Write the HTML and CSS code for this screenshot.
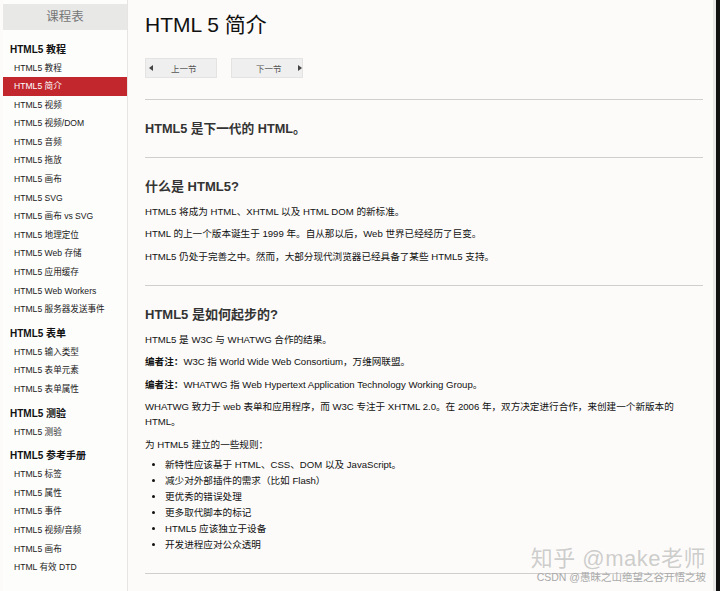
FILE: index.html
```
<!doctype html>
<html lang="zh-CN">
  <head>
    <meta charset="UTF-8" />
    <meta name="viewport" content="width=device-width, initial-scale=1.0" />
    <title>HTML 5 简介</title>
    <link rel="stylesheet" href="styles.css">
  </head>
  <body>
    <div class="page">
      <aside class="sidebar">
        <div class="sidebar-title">课程表</div>
        <h4 class="group">HTML5 教程</h4>
        <a class="item" href="#">HTML5 教程</a>
        <a class="item active" href="#">HTML5 简介</a>
        <a class="item" href="#">HTML5 视频</a>
        <a class="item" href="#">HTML5 视频/DOM</a>
        <a class="item" href="#">HTML5 音频</a>
        <a class="item" href="#">HTML5 拖放</a>
        <a class="item" href="#">HTML5 画布</a>
        <a class="item" href="#">HTML5 SVG</a>
        <a class="item" href="#">HTML5 画布 vs SVG</a>
        <a class="item" href="#">HTML5 地理定位</a>
        <a class="item" href="#">HTML5 Web 存储</a>
        <a class="item" href="#">HTML5 应用缓存</a>
        <a class="item" href="#">HTML5 Web Workers</a>
        <a class="item" href="#">HTML5 服务器发送事件</a>
        <h4 class="group">HTML5 表单</h4>
        <a class="item" href="#">HTML5 输入类型</a>
        <a class="item" href="#">HTML5 表单元素</a>
        <a class="item" href="#">HTML5 表单属性</a>
        <h4 class="group">HTML5 测验</h4>
        <a class="item" href="#">HTML5 测验</a>
        <h4 class="group">HTML5 参考手册</h4>
        <a class="item" href="#">HTML5 标签</a>
        <a class="item" href="#">HTML5 属性</a>
        <a class="item" href="#">HTML5 事件</a>
        <a class="item" href="#">HTML5 视频/音频</a>
        <a class="item" href="#">HTML5 画布</a>
        <a class="item" href="#">HTML 有效 DTD</a>
      </aside>

      <main class="content">
        <h1 class="title">HTML 5 简介</h1>

        <div class="pager">
          <a class="pager-btn prev" href="#">
            <svg width="4" height="6" viewBox="0 0 4 6"><path d="M4 0 L0 3 L4 6 Z" fill="#444"/></svg>
            <span>上一节</span>
          </a>
          <a class="pager-btn next" href="#">
            <span>下一节</span>
            <svg width="4" height="6" viewBox="0 0 4 6"><path d="M0 0 L4 3 L0 6 Z" fill="#444"/></svg>
          </a>
        </div>

        <hr />
        <div class="intro">HTML5 是下一代的 HTML。</div>
        <hr />

        <section class="block">
          <h2>什么是 HTML5?</h2>
          <p>HTML5 将成为 HTML、XHTML 以及 HTML DOM 的新标准。</p>
          <p>HTML 的上一个版本诞生于 1999 年。自从那以后，Web 世界已经经历了巨变。</p>
          <p>HTML5 仍处于完善之中。然而，大部分现代浏览器已经具备了某些 HTML5 支持。</p>
        </section>
        <hr />

        <section class="block">
          <h2>HTML5 是如何起步的?</h2>
          <p>HTML5 是 W3C 与 WHATWG 合作的结果。</p>
          <p><b>编者注：</b>W3C 指 World Wide Web Consortium，万维网联盟。</p>
          <p><b>编者注：</b>WHATWG 指 Web Hypertext Application Technology Working Group。</p>
          <p>WHATWG 致力于 web 表单和应用程序，而 W3C 专注于 XHTML 2.0。在 2006 年，双方决定进行合作，来创建一个新版本的 HTML。</p>
          <p>为 HTML5 建立的一些规则：</p>
          <ul>
            <li>新特性应该基于 HTML、CSS、DOM 以及 JavaScript。</li>
            <li>减少对外部插件的需求（比如 Flash）</li>
            <li>更优秀的错误处理</li>
            <li>更多取代脚本的标记</li>
            <li>HTML5 应该独立于设备</li>
            <li>开发进程应对公众透明</li>
          </ul>
        </section>
        <hr />
      </main>

      <div class="edge"></div>
    </div>

    <div class="watermark">
      <div class="wm-big">知乎 @make老师</div>
      <div class="wm-small">CSDN @愚昧之山绝望之谷开悟之坡</div>
    </div>
  </body>
</html>
```

FILE: styles.css
```
html,
body {
  margin: 0;
  height: 100%;
  overflow: hidden;
}
body {
  font-family: "Liberation Sans", "Noto Sans CJK SC", sans-serif;
  background-color: #fcfbf9;
  color: #111;
}
.page {
  display: flex;
  height: 591px;
}

/* sidebar */
.sidebar {
  width: 124px;
  margin-left: 3px;
  border-right: 1px solid #e6e5e3;
  background-color: #fdfdfc;
  display: flex;
  flex-direction: column;
}
.sidebar-title {
  margin-top: 4px;
  height: 26px;
  line-height: 26px;
  text-align: center;
  background-color: #e8e8e7;
  color: #777;
  font-size: 12.5px;
}
.group {
  margin: 5px 0 0;
  padding-left: 7px;
  height: 19px;
  line-height: 19px;
  font-size: 10px;
  font-weight: bold;
  color: #111;
}
.sidebar-title + .group {
  margin-top: 9.5px;
}
.item {
  display: block;
  height: 18.6px;
  line-height: 18.6px;
  padding-left: 11px;
  font-size: 8.6px;
  color: #1a1a1a;
  text-decoration: none;
  white-space: nowrap;
}
.item.active {
  background-color: #c1272d;
  color: #fff;
}

/* main column */
.content {
  flex: 1;
  padding: 0 10px 0 17px;
}
.title {
  margin: 12px 0 0;
  font-size: 21px;
  line-height: 26px;
  font-weight: normal;
  color: #111;
}
.pager {
  display: flex;
  gap: 14px;
  margin: 20px 0 21px;
}
.pager-btn {
  display: flex;
  align-items: center;
  box-sizing: border-box;
  width: 72px;
  height: 20px;
  background-color: #efefef;
  border: 1px solid #e3e3e3;
  font-size: 8.5px;
  color: #555;
  text-decoration: none;
  white-space: nowrap;
}
.prev {
  padding-left: 3px;
}
.prev span {
  margin-left: 18px;
}
.next {
  padding-left: 24px;
}
.next span {
  margin-right: 16px;
}
hr {
  border: 0;
  border-top: 1px solid #cfcfcf;
  margin: 0;
  width: 558px;
}
.intro {
  padding: 19px 0 18px;
  line-height: 20px;
  font-size: 12.7px;
  font-weight: bold;
  color: #333;
}
.block {
  padding: 19px 0 20px;
  width: 558px;
}
.block h2 {
  margin: 0 0 6.5px;
  line-height: 20px;
  font-size: 13px;
  font-weight: bold;
  color: #333;
}
.block p {
  margin: 0 0 7.5px;
  line-height: 15px;
  font-size: 9.6px;
}
.block p:last-child {
  margin-bottom: 1.5px;
}
.block ul {
  margin: -2px 0 0;
  padding-left: 20px;
  font-size: 9.6px;
  line-height: 16px;
}

/* right window edge */
.edge {
  width: 3px;
  background-color: #e8e8e8;
  border-right: 4px solid #111;
}

/* watermark */
.watermark {
  position: absolute;
  right: 14px;
  bottom: 8px;
  text-align: right;
}
.wm-big {
  font-size: 22px;
  line-height: 24px;
  color: rgba(190, 190, 190, 0.75);
  letter-spacing: 0.5px;
}
.wm-small {
  font-size: 10.5px;
  line-height: 12px;
  color: #aaa;
}
```
